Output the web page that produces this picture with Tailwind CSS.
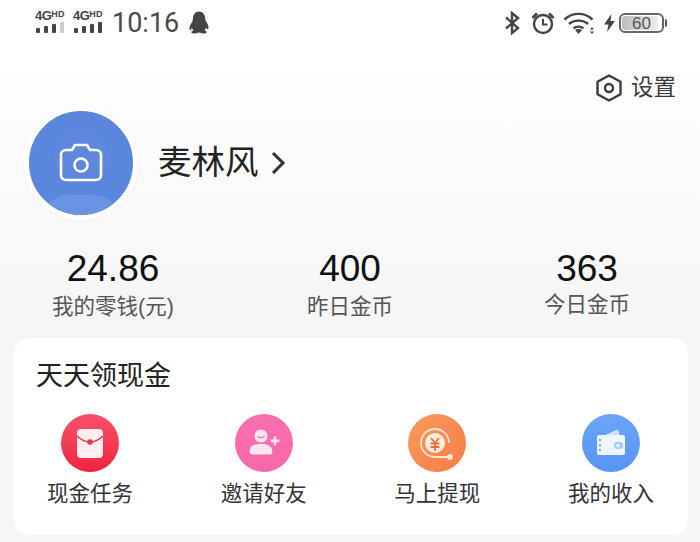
<!DOCTYPE html>
<html lang="zh-CN">
<head>
<meta charset="UTF-8" />
<title>我的</title>
<script src="https://cdn.jsdelivr.net/npm/@tailwindcss/browser@4"></script>
</head>
<body class="w-[700px] h-[542px] overflow-hidden bg-[#f6f6f6] font-['Liberation_Sans','Noto_Sans_CJK_SC',sans-serif] text-[#2b2b2b]">
<div class="h-[338px] bg-gradient-to-b from-white from-[18%] to-[#f5f5f5]">
	<!-- status bar -->
	<div class="h-[46px] flex items-center justify-between pl-[35px] pr-[33px] text-[#444]">
		<div class="flex items-center">
			<div class="w-[32px] mr-[6px] mb-[6px]">
				<div class="text-[13px] leading-[12px] font-bold whitespace-nowrap tracking-[-0.5px]">4G<span class="text-[9px] align-[3px] tracking-[0.2px]">HD</span></div>
				<div class="flex items-end gap-[4px] h-[11px] pl-[1px]">
					<div class="w-[4px] h-[5px] rounded-[1px] bg-[#444]"></div>
					<div class="w-[4px] h-[7px] rounded-[1px] bg-[#444]"></div>
					<div class="w-[4px] h-[9px] rounded-[1px] bg-[#444]"></div>
					<div class="w-[4px] h-[11px] rounded-[1px] bg-[#ccc]"></div>
				</div>
			</div>
			<div class="w-[32px] mr-[7px] mb-[6px]">
				<div class="text-[13px] leading-[12px] font-bold whitespace-nowrap tracking-[-0.5px]">4G<span class="text-[9px] align-[3px] tracking-[0.2px]">HD</span></div>
				<div class="flex items-end gap-[4px] h-[11px] pl-[1px]">
					<div class="w-[4px] h-[5px] rounded-[1px] bg-[#444]"></div>
					<div class="w-[4px] h-[7px] rounded-[1px] bg-[#444]"></div>
					<div class="w-[4px] h-[9px] rounded-[1px] bg-[#444]"></div>
					<div class="w-[4px] h-[11px] rounded-[1px] bg-[#444]"></div>
				</div>
			</div>
			<span class="text-[27px] leading-none font-['Roboto'] text-[#4a4a4a]">10:16</span>
			<!-- qq penguin -->
			<svg class="ml-[10px]" width="20" height="24" viewBox="0 0 20 24" fill="#444">
				<path d="M10 .5c4 0 6 3 6.200 7 .1 1.500.6 2.500 1.300 3.500 1 1.600 2 3.500 2 5.500 0 1.500-.6 2-1.200 1.500l-1.300-1.200c-.3 1.200-.8 2-1.400 2.700 1.200.5 2.100 1 2.100 1.700 0 .9-1.800 1.300-3.700 1.300-1.700 0-2.900-.5-4-.9-1.100.4-2.300.9-4 .9-1.900 0-3.700-.4-3.700-1.300 0-.7.900-1.200 2.100-1.700-.6-.7-1.100-1.500-1.400-2.700L1.700 19C1.100 19.500.5 19 .5 17.500c0-2 1-3.900 2-5.500.7-1 1.200-2 1.300-3.500C4 3.500 6 .5 10 .5z"/>
			</svg>
		</div>
		<div class="flex items-center">
			<!-- bluetooth -->
			<svg width="16" height="24" viewBox="0 0 16 24" fill="none" stroke="#444" stroke-width="2.400">
				<path d="M2 6.500 14 17l-6 5V2l6 5L2 17.500"/>
			</svg>
			<!-- alarm -->
			<svg class="ml-[11px]" width="24" height="24" viewBox="0 0 24 24" fill="none" stroke="#444" stroke-width="2.400">
				<circle cx="12" cy="13" r="9"/>
				<path d="M12 8v5.500h4.500" stroke-width="2"/>
				<path d="M1.500 7 6 2.500M22.500 7 18 2.500" stroke-width="2.800"/>
			</svg>
			<!-- wifi -->
			<svg class="ml-[8px]" width="33" height="24" viewBox="0 0 32 24" fill="none" stroke="#444" stroke-width="2.400">
				<path d="M1 8.500C9 1 21 1 29 8.500"/>
				<path d="M5.500 13c5-4.500 14-4.500 19 0"/>
				<path d="M10 17.500c2.500-2.500 7.500-2.500 10 0" />
				<path d="M11.500 19 15 23l3.500-4c-1.500-1.500-5.500-1.500-7 0z" fill="#444" stroke="none"/>
				<path d="M28.500 16l-2 2.500h4zM26.500 20.500l2 2.500 2-2.500z" fill="#444" stroke="none"/>
			</svg>
			<!-- charging bolt -->
			<svg class="ml-[7px]" width="13" height="20" viewBox="0 0 13 20" fill="#444">
				<path d="M8.500 1 1 11.500h4.500L4 19l8-11H7.500z"/>
			</svg>
			<!-- battery -->
			<div class="ml-[3px] relative w-[45px] h-[20px] rounded-[6px] border-2 border-[#666] p-[1px] flex items-center justify-center">
				<div class="absolute left-[1px] inset-y-[1px] w-[36px] rounded-[3px] bg-gradient-to-r from-[#bdbdbd] to-[#ececec]"></div>
				<span class="relative text-[17px] leading-none text-[#555]">60</span>
			</div>
			<div class="ml-[1px] w-[2px] h-[8px] rounded-r-[2px] bg-[#555]"></div>
		</div>
	</div>

	<!-- settings -->
	<div class="h-[36px] mt-[24px] pr-[24px] flex justify-end items-center">
		<svg width="30" height="30" viewBox="0 0 30 30" fill="none" stroke="#3a3a3a" stroke-width="2.400">
			<path d="M15 2.500 26.500 8.700v12.600L15 27.500 3.500 21.300V8.700z" stroke-linejoin="round"/>
			<circle cx="15" cy="15" r="4"/>
		</svg>
		<span class="ml-[7px] text-[22.500px] leading-none text-[#3a3a3a]">设置</span>
	</div>

	<!-- profile -->
	<div class="pl-[24px] flex items-center">
		<div class="relative w-[114px] h-[114px] rounded-full border-[5px] border-white bg-[#5a86dd] shadow-[0_0_6px_rgba(0,0,0,0.03)] overflow-hidden flex items-center justify-center">
			<div class="absolute w-[56px] h-[56px] rounded-full top-[18px] bg-[#5e88de]"></div>
			<div class="absolute w-[84px] h-[60px] rounded-full top-[84px] bg-[#6a93e2]"></div>
			<svg class="relative" width="46" height="40" viewBox="0 0 46 40" fill="none" stroke="white" stroke-width="2.600" stroke-linejoin="round">
				<path d="M8 7h6l3-5h12l3 5h6c3 0 5 2 5 5v20c0 3-2 5-5 5H8c-3 0-5-2-5-5V12c0-3 2-5 5-5z"/>
				<circle cx="23" cy="22" r="6.500"/>
			</svg>
		</div>
		<span class="ml-[20px] text-[33.500px] leading-none text-[#222]">麦林风</span>
		<svg class="ml-[10px]" width="18" height="26" viewBox="0 0 18 26" fill="none" stroke="#333" stroke-width="3">
			<path d="M4 3l10 10L4 23"/>
		</svg>
	</div>

	<!-- stats -->
	<div class="mt-[29px] px-[13px] flex justify-between text-center">
		<div class="w-[200px]">
			<div class="text-[37px] leading-[40px] text-[#111]">24.86</div>
			<div class="text-[21.500px] leading-[30px] mt-[3px] text-[#555]">我的零钱(元)</div>
		</div>
		<div class="w-[200px]">
			<div class="text-[37px] leading-[40px] text-[#111]">400</div>
			<div class="text-[21.500px] leading-[30px] mt-[3px] text-[#555]">昨日金币</div>
		</div>
		<div class="w-[200px]">
			<div class="text-[37px] leading-[40px] text-[#111]">363</div>
			<div class="text-[21.500px] leading-[30px] mt-[1px] text-[#555]">今日金币</div>
		</div>
	</div>
</div>

<!-- card -->
<div class="ml-[14px] mr-[12px] h-[197px] rounded-[16px] bg-white">
	<div class="pt-[20px] pl-[22px] text-[27px] leading-[36px] text-[#222]">天天领现金</div>
	<div class="mt-[20px] pl-[26px] pr-[27px] flex justify-between">
		<div class="w-[100px] flex flex-col items-center">
			<div class="w-[58px] h-[58px] rounded-full bg-gradient-to-b from-[#f7506a] to-[#f02040] flex items-center justify-center">
				<svg width="26" height="29" viewBox="0 0 26 29">
					<rect x="0" y="0" width="26" height="29" rx="4" fill="#fdeef0"/>
					<path d="M0 7c4 4 9 6 13 6s9-2 13-6" fill="none" stroke="#e8354f" stroke-width="1.500"/>
					<circle cx="13" cy="13" r="2.800" fill="#e8354f"/>
				</svg>
			</div>
			<span class="mt-[7px] text-[21.500px] leading-[30px] text-[#333]">现金任务</span>
		</div>
		<div class="w-[100px] flex flex-col items-center">
			<div class="w-[58px] h-[58px] rounded-full bg-gradient-to-b from-[#fb6fb0] to-[#f569a8] flex items-center justify-center">
				<svg class="ml-[2px] -mt-[1px]" width="31" height="28" viewBox="0 0 34 32" fill="#fde4f0">
					<circle cx="13" cy="8" r="7.500"/>
					<path d="M0 26c0-7 5-9 13-9s13 2 13 9c0 2-1 3-3 3H3c-2 0-3-1-3-3z"/>
					<path d="M24 12h3.500V8.500h3V12H34v3h-3.500v3.500h-3V15H24z"/>
					<path d="M9 8c1.500 2.500 6.500 2.500 8 0" fill="none" stroke="#f569a8" stroke-width="1.200"/>
				</svg>
			</div>
			<span class="mt-[7px] text-[21.500px] leading-[30px] text-[#333]">邀请好友</span>
		</div>
		<div class="w-[100px] flex flex-col items-center">
			<div class="w-[58px] h-[58px] rounded-full bg-gradient-to-br from-[#fa9a5c] to-[#f77b48] flex items-center justify-center">
				<svg width="38" height="38" viewBox="0 0 38 38" fill="none">
					<path d="M31 33H17A14 14 0 1 1 31 19" stroke="#fde3d0" stroke-width="1.800"/>
					<circle cx="17" cy="19" r="10" fill="#fdeee2"/>
					<path d="M13 14l4 5 4-5M12.500 19.500h9M12.500 23h9M17 19v8" stroke="#f0703c" stroke-width="1.800"/>
					<circle cx="32" cy="33" r="3" fill="#fde3d0"/>
				</svg>
			</div>
			<span class="mt-[7px] text-[21.500px] leading-[30px] text-[#333]">马上提现</span>
		</div>
		<div class="w-[100px] flex flex-col items-center">
			<div class="w-[58px] h-[58px] rounded-full bg-gradient-to-b from-[#6aa5f8] to-[#5594f2] flex items-center justify-center">
				<svg width="30" height="28" viewBox="0 0 30 28">
					<path d="M7 7 20 1c1-.4 2 0 2.500 1L24 7z" fill="#cfe2fc"/>
					<path d="M3 6h24c1.500 0 2 1 2 2v16c0 1-.5 2-2 2H3c-1.500 0-2-1-2-2V8c0-1 .5-2 2-2z" fill="#eef5fe"/>
					<rect x="18" y="13" width="9" height="7" rx="3" fill="#a9cbfa"/>
					<circle cx="22" cy="16.500" r="1.800" fill="#eef5fe"/>
					<path d="M4 10v2M4 15v2M4 20v2" stroke="#5594f2" stroke-width="1.600"/>
				</svg>
			</div>
			<span class="mt-[7px] text-[21.500px] leading-[30px] text-[#333]">我的收入</span>
		</div>
	</div>
</div>
</body>
</html>
